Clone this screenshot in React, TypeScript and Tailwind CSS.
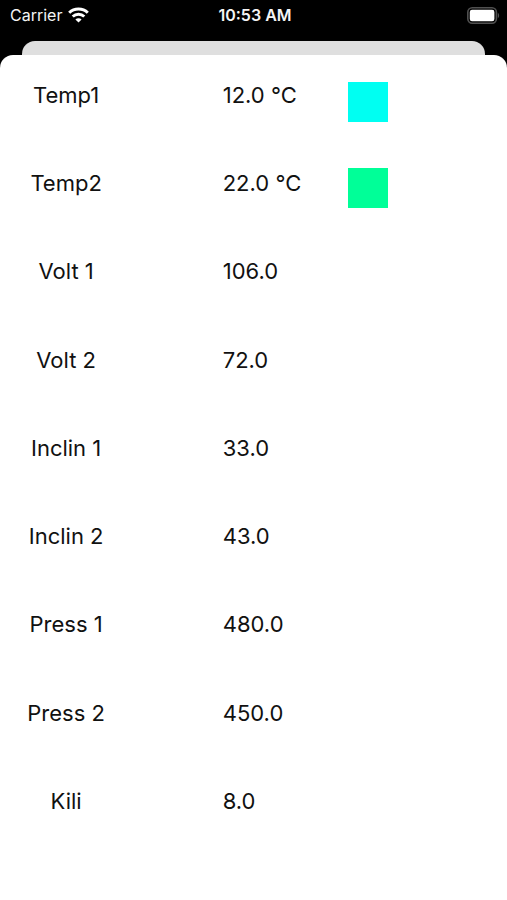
interface Reading {
  label: string;
  value: string;
}

const readings: Reading[] = [
  { label: 'Temp1', value: '12.0 °C' },
  { label: 'Temp2', value: '22.0 °C' },
  { label: 'Volt 1', value: '106.0' },
  { label: 'Volt 2', value: '72.0' },
  { label: 'Inclin 1', value: '33.0' },
  { label: 'Inclin 2', value: '43.0' },
  { label: 'Press 1', value: '480.0' },
  { label: 'Press 2', value: '450.0' },
  { label: 'Kili', value: '8.0' },
];

const WifiIcon = () => (
  <svg width="21" height="16" viewBox="0 0 21 16" fill="none" stroke="white" strokeWidth="3" aria-hidden="true">
    <path d="M1.2 5.8C6.3 .8 14.7 .8 19.8 5.8" />
    <path d="M4.7 9.5C8 6.4 13 6.4 16.3 9.5" />
    <path d="M10.5 15.6 7.4 12.5C9 10.9 12 10.9 13.6 12.5Z" fill="white" stroke="none" />
  </svg>
);

const BatteryIcon = () => (
  <svg width="33" height="17" viewBox="0 0 33 17" aria-hidden="true">
    <rect x="0.8" y="0.8" width="28.6" height="15.4" rx="4.4" fill="none" stroke="#505050" strokeWidth="1.6" />
    <rect x="2.8" y="2.8" width="24.6" height="11.4" rx="2.2" fill="white" />
    <path d="M30.8 6C32.6 6.6 32.6 10.4 30.8 11Z" fill="#505050" />
  </svg>
);

const StatusBar = () => {
  return (
    <header className="grid grid-cols-3 items-center h-7 pl-2.5 pr-[7px] pt-0.5 text-[#f4f4f4]">
      <div className="flex items-center gap-1.5">
        <span className="text-base">Carrier</span>
        <WifiIcon />
      </div>
      <span className="text-center text-base font-semibold">10:53 AM</span>
      <div className="flex justify-end">
        <BatteryIcon />
      </div>
    </header>
  );
};

const ReadingRow = ({ label, value }: Reading) => {
  return (
    <div className="flex items-start">
      <dt className="w-[38%] text-center">{label}</dt>
      <dd className="grow pl-[26%]">{value}</dd>
    </div>
  );
};

export default function App() {
  return (
    <div className="flex flex-col min-h-screen bg-black font-['Inter',sans-serif]">
      <StatusBar />
      <div className="mx-[22px] mt-[13px] h-3.5 rounded-t-[13px] bg-[#dfdfdf]" />
      <main className="flex grow rounded-t-[13px] bg-white pt-[27px] pb-6 text-[22px] leading-[26px] text-[#111111]">
        <dl className="grid w-[348px] auto-rows-fr">
          {readings.map((reading) => (
            <ReadingRow key={reading.label} {...reading} />
          ))}
        </dl>
        {/* temperature colours */}
        <div className="flex flex-col gap-[46px]">
          <span className="size-10 bg-[#00fff2]" />
          <span className="size-10 bg-[#00ff98]" />
        </div>
      </main>
    </div>
  );
}
